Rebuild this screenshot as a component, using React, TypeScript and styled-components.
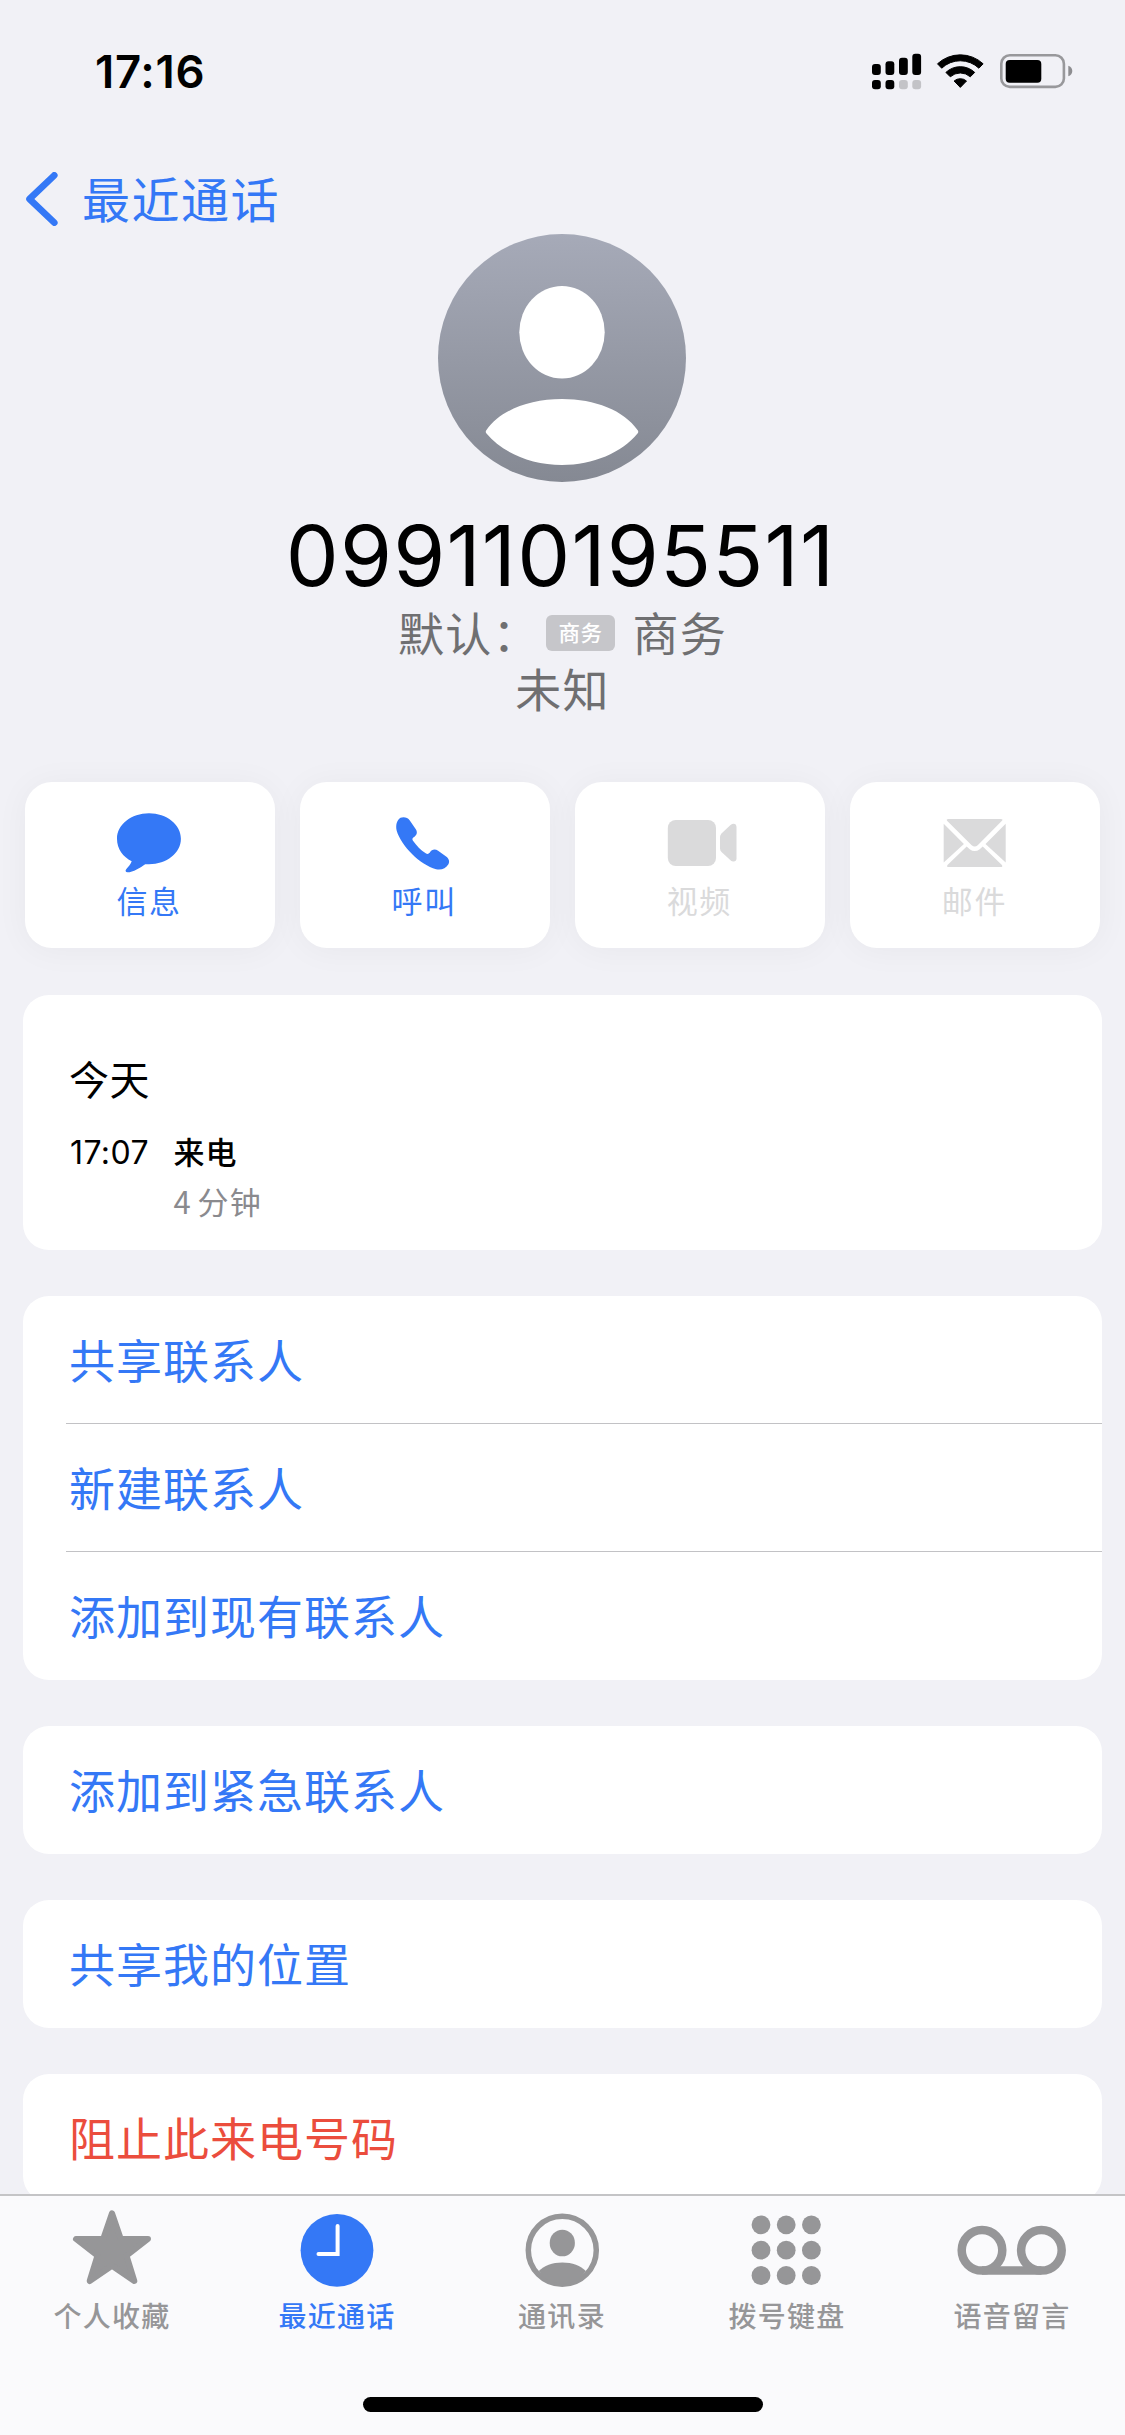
import React from "react";
import styled, { createGlobalStyle } from "styled-components";

const BLUE = "#3478f6";
const RED = "#eb4d3d";
const CJK = `"Noto Sans CJK SC", sans-serif`;
const LATIN = `Inter, "Noto Sans CJK SC", sans-serif`;

const GlobalStyle = createGlobalStyle`
  * { box-sizing: border-box; }
  body { margin: 0; background: #f1f1f6; }
`;

const Screen = styled.div`
  width: 1125px;
  height: 2435px;
  overflow: hidden;
  display: flex;
  flex-direction: column;
  background: #f1f1f6;
  font-family: ${CJK};
`;

const StatusBar = styled.header`
  flex: none;
  height: 140px;
  padding: 50px 49px 0 95px;
  display: flex;
  justify-content: space-between;
  align-items: flex-start;
`;

const Clock = styled.span`
  font: 600 45.5px/44px ${LATIN};
  letter-spacing: 0.7px;
  color: #000;
`;

const StatusIcons = styled.svg`
  width: 206px;
  height: 44px;
`;

const NavBar = styled.nav`
  flex: none;
  height: 94px;
  padding: 32px 0 0 26px;
  display: flex;
  align-items: flex-start;
  gap: 24px;
`;

const BackIcon = styled.svg`
  width: 32px;
  height: 54px;
`;

const BackLabel = styled.span`
  font-size: 48px;
  line-height: 54px;
  letter-spacing: 1.5px;
  color: ${BLUE};
  margin-top: -2px;
`;

const Profile = styled.section`
  flex: none;
  height: 548px;
  display: flex;
  flex-direction: column;
  align-items: center;
`;

const Avatar = styled.svg`
  width: 248px;
  height: 248px;
  margin-right: 1px;
`;

const PhoneNumber = styled.h1`
  margin: 32px 4px 5px 0;
  font: 400 84px/84px ${LATIN};
  letter-spacing: 1.2px;
  color: #000;
`;

const SubLine = styled.div`
  display: flex;
  align-items: center;
  height: 56px;
  font-size: 46px;
  line-height: 56px;
  letter-spacing: 1.3px;
  color: #6f6f71;
`;

const LineTag = styled.span`
  width: 69px;
  height: 36px;
  margin: 3px 17.5px 0 6px;
  border-radius: 6px;
  background: #c6c6ca;
  color: #fff;
  font-size: 21.5px;
  font-weight: 500;
  line-height: 34px;
  letter-spacing: 0.4px;
  text-align: center;
`;

const Actions = styled.div`
  flex: none;
  display: grid;
  grid-template-columns: repeat(4, 1fr);
  gap: 25px;
  padding: 0 25px 0 24.5px;
`;

const ActionCard = styled.button<{ $off?: boolean }>`
  height: 166px;
  padding: 26px 1px 0 0;
  border: 0;
  border-radius: 27px;
  background: #fff;
  box-shadow: 0 2px 34px rgba(0, 0, 40, 0.045);
  display: flex;
  flex-direction: column;
  align-items: center;
  color: ${(p) => (p.$off ? "#dadadb" : BLUE)};
  font-family: ${CJK};
`;

const ActionIcon = styled.svg`
  width: 80px;
  height: 70px;
  fill: currentColor;
`;

const ActionLabel = styled.span`
  font-size: 31px;
  line-height: 40px;
  letter-spacing: 1.6px;
  margin-top: 2px;
`;

const Groups = styled.main`
  flex: 1;
  min-height: 0;
  overflow: hidden;
  padding: 47px 23px 0;
  display: flex;
  flex-direction: column;
  gap: 46px;
`;

const Group = styled.section`
  flex: none;
  border-radius: 26px;
  background: #fff;
  overflow: hidden;
`;

const CallLog = styled(Group)`
  height: 255px;
  padding: 56px 46px 0;
`;

const LogDay = styled.h2`
  margin: 0;
  font-size: 40px;
  line-height: 54px;
  font-weight: 400;
  letter-spacing: 0.4px;
  color: #000;
`;

const LogGrid = styled.div`
  margin-top: 21px;
  display: grid;
  grid-template-columns: 104.5px 1fr;
  grid-auto-rows: 50px;
  align-items: center;
  color: #000;
`;

const LogTime = styled.span`
  font: 400 32px/50px ${LATIN};
  letter-spacing: 0.4px;
  padding: 3px 0 0 1px;
`;

const LogKind = styled.span`
  font-size: 31px;
  line-height: 50px;
  font-weight: 500;
  letter-spacing: 1px;
`;

const LogLength = styled.span`
  grid-column: 2;
  font-size: 31px;
  line-height: 50px;
  letter-spacing: 1.4px;
  word-spacing: -3px;
  color: #8a8a8e;
`;

const Row = styled.div<{ $danger?: boolean }>`
  height: 128px;
  margin-left: 43px;
  padding-left: 3px;
  display: flex;
  align-items: center;
  font-size: 46px;
  line-height: 60px;
  letter-spacing: 1px;
  color: ${(p) => (p.$danger ? RED : BLUE)};
  &:not(:last-child) {
    padding-top: 1px;
    border-bottom: 1px solid #c2c2c5;
  }
`;

const RowLabel = styled.span`
  margin-top: -5px;
`;

const TabBar = styled.footer`
  flex: none;
  height: 241px;
  border-top: 2px solid #c4c4c6;
  background: #fafafc;
  display: flex;
  flex-direction: column;
  align-items: center;
  justify-content: space-between;
  padding-bottom: 23px;
`;

const Tabs = styled.div`
  display: grid;
  grid-template-columns: repeat(5, 225px);
`;

const Tab = styled.div<{ $active?: boolean }>`
  display: flex;
  flex-direction: column;
  align-items: center;
  padding-top: 10px;
  padding-right: 1px;
  color: ${(p) => (p.$active ? BLUE : "#969698")};
`;

const TabIcon = styled.svg`
  width: 120px;
  height: 90px;
`;

const TabLabel = styled.span`
  font-size: 28px;
  line-height: 36px;
  font-weight: 500;
  letter-spacing: 1.3px;
  margin-top: 1px;
`;

const HomeIndicator = styled.div`
  width: 400px;
  height: 15px;
  border-radius: 8px;
  background: #000;
`;

const SIGNAL = [
  { x: 2, top: 14 },
  { x: 15.5, top: 11.3 },
  { x: 29, top: 7.7 },
  { x: 42.3, top: 3.7 },
];

function StatusGlyphs() {
  return (
    <StatusIcons viewBox="0 0 206 44">
      {SIGNAL.map((b, i) => (
        <g key={b.x}>
          <rect x={b.x} y={b.top} width="8.8" height={25 - b.top} rx="3" />
          <rect x={b.x} y="30" width="8.8" height="9.3" rx="3" fill={i > 1 ? "#c3c3c7" : "#000"} />
        </g>
      ))}
      <g transform="translate(90.3 38)" stroke="#000" strokeWidth="1" strokeLinejoin="round">
        <path d="M-22.8 -24.2A33.5 33.5 0 0 1 22.8 -24.2L18.6 -19.8A27 27 0 0 0 -18.6 -19.8Z" />
        <path d="M-14.4 -15.6A21 21 0 0 1 14.4 -15.6L10 -11.2A15 15 0 0 0 -10 -11.2Z" />
        <path d="M-6.2 -7A9.5 9.5 0 0 1 6.2 -7L0 -0.6Z" />
      </g>
      <rect x="131.3" y="5.3" width="62.6" height="31.6" rx="8.5" fill="none" stroke="#98989b" strokeWidth="2.6" />
      <rect x="135.7" y="10" width="35.6" height="22.7" rx="4" />
      <path d="M198.3 15.7C200.8 16.6 202.3 18.6 202.3 21S200.8 25.4 198.3 26.3Z" fill="#8d8d90" />
    </StatusIcons>
  );
}

const glyphs = {
  message: (
    <path d="M40 5.3C57.7 5.3 71.900 16.5 71.900 30.8C71.900 45 57.7 56.3 40 56.3C38.6 56.3 37.4 56.2 36.2 56.2C31.5 59.5 24 64.3 18.5 64.3C16.6 64.3 16 62.7 17.2 61.3C19.5 58.5 21.500 56.500 22.700 53.300C14 48.900 8 41 8 30.800C8 16.500 22.300 5.300 40 5.300Z" />
  ),
  call: (
    <path
      transform="translate(-1.3 0)"
      d="M17.8 9.8C20.9 8.5 25.1 9.4 27.1 12.5L33.1 21.3C35 24.2 34.3 27.2 31.4 28.9C29.5 30 29.3 31.1 30.3 32.7C33.8 37.7 38 42 43 45.3C44.7 46.3 45.9 46 47.2 44.4C49.2 41.2 52.4 40.9 55.4 42.8L63.4 48.4C66.3 50.4 67.2 53.5 65.7 56.2C63.1 60.4 58.7 62.4 53.4 61.2C37.4 57 18.5 38 14 22.8C12.7 17.4 14.1 12 17.8 9.8Z"
    />
  ),
  video: (
    <g transform="translate(1 0)">
      <rect x="7.8" y="12" width="48.2" height="46" rx="8" />
      <path d="M61.5 25.5L70.5 17C73.5 14.6 76.5 15.8 76.5 19V50.5C76.5 53.5 73.5 54.8 70.5 52.2L61.5 44Q60 42.6 60 40.500V29Q60 27 61.500 25.500Z" />
    </g>
  ),
  mail: (
    <g transform="translate(0.7 0)">
      <path d="M13.8 11H66Q69 11 67 13L43 37.2Q40 40 37 37.2L12.6 13Q11 11 13.8 11Z" />
      <path d="M9 15.8L29.2 36L9 54.5Z" />
      <path d="M71 15.8L50.8 36L71 54.5Z" />
      <path d="M32 38.5L35 41.2Q40 45 45 41.2L48 38.5L67.2 57Q68.5 59 66 59H14Q11.5 59 12.8 57Z" />
    </g>
  ),
};

const actions: { icon: keyof typeof glyphs; label: string; off?: boolean }[] = [
  { icon: "message", label: "信息" },
  { icon: "call", label: "呼叫" },
  { icon: "video", label: "视频", off: true },
  { icon: "mail", label: "邮件", off: true },
];

const tabGlyphs = {
  favorites: (
    <path
      d="M60 7.3L68.8 33H96L74.5 49.7L82.3 75L60 59.8L37.7 75L45.5 49.7L24 33H51.2Z"
      fill="currentColor"
      stroke="currentColor"
      strokeWidth="6"
      strokeLinejoin="round"
    />
  ),
  recents: (
    <>
      <circle cx="60" cy="44.3" r="36.4" fill="currentColor" />
      <path d="M60.6 20V47.9H41.5" fill="none" stroke="#fff" strokeWidth="4" strokeLinecap="round" />
    </>
  ),
  contacts: (
    <>
      <circle cx="60.300" cy="44.3" r="34" fill="none" stroke="currentColor" strokeWidth="5.5" />
      <ellipse cx="60.300" cy="37" rx="12.6" ry="13.3" fill="currentColor" />
      <path d="M36.800 65C41.800 59.5 50.300 56.4 60.300 56.4S78.800 59.5 83.800 65C78.300 73 70.300 77.5 60.300 77.5S42.300 73 36.800 65Z" fill="currentColor" />
    </>
  ),
  keypad: (
    <>
      {[18.8, 44.2, 69.5].map((y) =>
        [34, 59.2, 84.4].map((x) => <circle key={`${x}-${y}`} cx={x} cy={y} r="9.4" fill="currentColor" />)
      )}
    </>
  ),
  voicemail: (
    <g fill="none" stroke="currentColor" strokeWidth="8.5">
      <circle cx="30" cy="44.3" r="20.3" />
      <circle cx="89.4" cy="44.3" r="20.3" />
      <path d="M30 64.6H89.4" />
    </g>
  ),
};

const tabs: { icon: keyof typeof tabGlyphs; label: string; active?: boolean }[] = [
  { icon: "favorites", label: "个人收藏" },
  { icon: "recents", label: "最近通话", active: true },
  { icon: "contacts", label: "通讯录" },
  { icon: "keypad", label: "拨号键盘" },
  { icon: "voicemail", label: "语音留言" },
];

const groups: { label: string; danger?: boolean }[][] = [
  [{ label: "共享联系人" }, { label: "新建联系人" }, { label: "添加到现有联系人" }],
  [{ label: "添加到紧急联系人" }],
  [{ label: "共享我的位置" }],
  [{ label: "阻止此来电号码", danger: true }],
];

export default function App() {
  return (
    <Screen>
      <GlobalStyle />
      <StatusBar>
        <Clock>17:16</Clock>
        <StatusGlyphs />
      </StatusBar>

      <NavBar>
        <BackIcon viewBox="0 0 32 54">
          <path d="M28.3 3.3L3.5 27L28.3 50.7" fill="none" stroke={BLUE} strokeWidth="6.6" strokeLinecap="round" strokeLinejoin="round" />
        </BackIcon>
        <BackLabel>最近通话</BackLabel>
      </NavBar>

      <Profile>
        <Avatar viewBox="0 0 248 248">
          <defs>
            <linearGradient id="avatar" x1="0" y1="0" x2="0" y2="1">
              <stop offset="0" stopColor="#a6aab8" />
              <stop offset="1" stopColor="#858993" />
            </linearGradient>
          </defs>
          <circle cx="124" cy="124" r="124" fill="url(#avatar)" />
          <ellipse cx="124" cy="98.3" rx="42.7" ry="46.3" fill="#fff" />
          <path d="M48.5 196C62 176.5 91 165 124 165S186 176.5 199.5 196Q201 197.7 199.5 199.5C184 218.5 155 231 124 231S64 218.5 48.5 199.5Q47 197.7 48.5 196Z" fill="#fff" />
        </Avatar>
        <PhoneNumber>099110195511</PhoneNumber>
        <SubLine>
          默认：
          <LineTag>商务</LineTag>
          商务
        </SubLine>
        <SubLine>未知</SubLine>
      </Profile>

      <Actions>
        {actions.map((a) => (
          <ActionCard key={a.icon} $off={a.off}>
            <ActionIcon viewBox="0 0 80 70">{glyphs[a.icon]}</ActionIcon>
            <ActionLabel>{a.label}</ActionLabel>
          </ActionCard>
        ))}
      </Actions>

      <Groups>
        <CallLog>
          <LogDay>今天</LogDay>
          <LogGrid>
            <LogTime>17:07</LogTime>
            <LogKind>来电</LogKind>
            <LogLength>4 分钟</LogLength>
          </LogGrid>
        </CallLog>
        {groups.map((rows) => (
          <Group key={rows[0].label}>
            {rows.map((r) => (
              <Row key={r.label} $danger={r.danger}>
                <RowLabel>{r.label}</RowLabel>
              </Row>
            ))}
          </Group>
        ))}
      </Groups>

      <TabBar>
        <Tabs>
          {tabs.map((t) => (
            <Tab key={t.icon} $active={t.active}>
              <TabIcon viewBox="0 0 120 90">{tabGlyphs[t.icon]}</TabIcon>
              <TabLabel>{t.label}</TabLabel>
            </Tab>
          ))}
        </Tabs>
        <HomeIndicator />
      </TabBar>
    </Screen>
  );
}
